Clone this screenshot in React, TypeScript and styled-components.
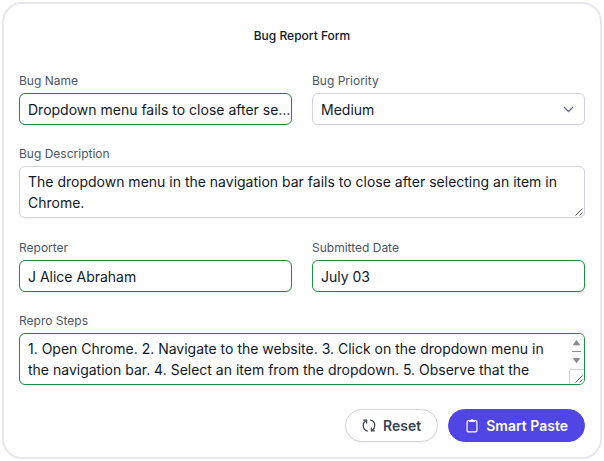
import React from "react";
import styled, { createGlobalStyle, css } from "styled-components";

const GlobalStyle = createGlobalStyle`
  *, *::before, *::after { box-sizing: border-box; }
  body {
    margin: 0;
    padding: 2px;
    background: #fff;
    color: #111827;
    font-family: Inter, "Liberation Sans", sans-serif;
  }
`;

const Card = styled.form`
  display: flex;
  flex-direction: column;
  padding: 24px 15px 15px;
  border: 2px solid #e5e7eb;
  border-radius: 20px;
  background: #fff;
`;

const Title = styled.h1`
  margin: 0 0 28px;
  font-size: 12px;
  line-height: 16px;
  font-weight: 500;
  text-align: center;
`;

const Fields = styled.div`
  display: grid;
  grid-template-columns: 1fr 1fr;
  gap: 20px;
`;

const Field = styled.div<{ $wide?: boolean }>`
  display: flex;
  flex-direction: column;
  gap: 3px;
  min-width: 0;
  ${(p) =>
    p.$wide &&
    css`
      grid-column: 1 / -1;
      padding-bottom: 1px;
    `}
`;

const Label = styled.label`
  font-size: 12px;
  line-height: 18px;
  color: #4b5563;
`;

const control = css<{ $filled?: boolean }>`
  display: block;
  width: 100%;
  margin: 0;
  border: 1px solid ${(p) => (p.$filled ? "#1e8a44" : "#d1d5db")};
  border-radius: 6px;
  background: #fff;
  box-shadow: 0 1px 2px rgba(0, 0, 0, 0.05);
  color: #111827;
  font: 400 14px/21px Inter, "Liberation Sans", sans-serif;
  outline: none;
`;

const TextInput = styled.input<{ $filled?: boolean }>`
  ${control}
  height: 32px;
  padding: 0 0 0 8px;
  text-overflow: ellipsis;
`;

const Select = styled.select<{ $filled?: boolean }>`
  ${control}
  height: 32px;
  padding: 0 32px 0 8px;
  appearance: none;
`;

const TextArea = styled.textarea<{ $filled?: boolean }>`
  ${control}
  height: 52px;
  padding: 4px 23px 4px 8px;
  resize: none;
  overflow: hidden;
`;

const ControlBox = styled.div`
  position: relative;
`;

const Chevron = styled.svg`
  position: absolute;
  right: 11px;
  top: 11px;
  pointer-events: none;
`;

const Grip = styled.svg`
  position: absolute;
  right: 1px;
  bottom: 1px;
  pointer-events: none;
`;

const ScrollBar = styled.svg`
  position: absolute;
  right: 1px;
  top: 1px;
  pointer-events: none;
`;

const Actions = styled.div`
  display: flex;
  justify-content: flex-end;
  gap: 10px;
  margin-top: 23px;
`;

const Button = styled.button<{ $primary?: boolean }>`
  display: flex;
  align-items: center;
  gap: 6px;
  height: 33px;
  padding: 0 16px;
  border: 1px solid ${(p) => (p.$primary ? "#4f46e5" : "#d1d5db")};
  border-radius: 17px;
  background: ${(p) => (p.$primary ? "#4f46e5" : "#fff")};
  box-shadow: ${(p) => (p.$primary ? "none" : "0 1px 2px rgba(0, 0, 0, 0.05)")};
  color: ${(p) => (p.$primary ? "#fff" : "#374151")};
  font: 600 14px/20px Inter, "Liberation Sans", sans-serif;
  cursor: pointer;
`;

const ChevronIcon = () => (
  <Chevron width="11" height="11" viewBox="0 0 11 11" fill="none" aria-hidden="true">
    <path d="M1 3l4.5 4.5L10 3" stroke="#6b7280" strokeWidth="1.3" />
  </Chevron>
);

const GripIcon = () => (
  <Grip width="15" height="15" viewBox="0 0 15 15" fill="none" aria-hidden="true">
    <path d="M6.5 13.5l7-7M10.5 13.5l3-3" stroke="#555" />
  </Grip>
);

const ScrollIcon = () => (
  <ScrollBar width="15" height="50" viewBox="0 0 15 50" fill="none" aria-hidden="true">
    <path d="M0 0h10a5 5 0 0 1 5 5v40a5 5 0 0 1-5 5H0z" fill="#fafafa" />
    <path d="M7.5 6l3.2 4.2c.4.6 0 1-.5 1H4.8c-.5 0-.9-.4-.5-1z" fill="#8b8b8b" />
    <path d="M3 17.5h9" stroke="#8b8b8b" />
    <path d="M7.5 29.2l3.2-4.2c.4-.6 0-1-.5-1H4.8c-.5 0-.9.4-.5 1z" fill="#8b8b8b" />
    <path d="M0 35h15v10a5 5 0 0 1-5 5H0z" fill="#fff" />
    <path d="M.5 50V35.5H15" stroke="#d4d4d4" />
  </ScrollBar>
);

const RepeatIcon = () => (
  <svg width="15" height="15" viewBox="0 0 15 15" fill="none" stroke="currentColor" strokeWidth="1.2" aria-hidden="true">
    <path d="M5.8 13.2C3.2 12.5 1.2 10.300 1.2 7.5c0-2 1-3.700 2.700-4.800" />
    <path d="M1.300 2.200h3.300v3.300" />
    <path d="M8.200 1.800c2.600.7 4.600 2.900 4.600 5.700 0 2-1 3.700-2.700 4.800" />
    <path d="M12.700 12.800H9.400V9.500" />
  </svg>
);

const ClipboardIcon = () => (
  <svg width="15" height="15" viewBox="0 0 15 15" fill="none" aria-hidden="true">
    <rect x="2.1" y="2.6" width="9.8" height="11.3" rx="1.5" stroke="currentColor" strokeWidth="1.2" />
    <path d="M4 2.500h1.300a1.800 1.800 0 0 1 3.400 0H10v1.500H4z" fill="currentColor" />
  </svg>
);

export default function App() {
  return (
    <>
      <GlobalStyle />
      <Card onSubmit={(e: React.FormEvent) => e.preventDefault()}>
        <Title>Bug Report Form</Title>
        <Fields>
          <Field>
            <Label htmlFor="name">Bug Name</Label>
            <TextInput id="name" $filled defaultValue="Dropdown menu fails to close after selection" />
          </Field>
          <Field>
            <Label htmlFor="priority">Bug Priority</Label>
            <ControlBox>
              <Select id="priority" defaultValue="Medium">
                <option>Medium</option>
              </Select>
              <ChevronIcon />
            </ControlBox>
          </Field>
          <Field $wide>
            <Label htmlFor="description">Bug Description</Label>
            <ControlBox>
              <TextArea
                id="description"
                defaultValue="The dropdown menu in the navigation bar fails to close after selecting an item in Chrome."
              />
              <GripIcon />
            </ControlBox>
          </Field>
          <Field>
            <Label htmlFor="reporter">Reporter</Label>
            <TextInput id="reporter" $filled defaultValue="J Alice Abraham" />
          </Field>
          <Field>
            <Label htmlFor="date">Submitted Date</Label>
            <TextInput id="date" $filled defaultValue="July 03" />
          </Field>
          <Field $wide>
            <Label htmlFor="steps">Repro Steps</Label>
            <ControlBox>
              <TextArea
                id="steps"
                $filled
                defaultValue="1. Open Chrome. 2. Navigate to the website. 3. Click on the dropdown menu in the navigation bar. 4. Select an item from the dropdown. 5. Observe that the"
              />
              <ScrollIcon />
              <GripIcon />
            </ControlBox>
          </Field>
        </Fields>
        <Actions>
          <Button type="reset">
            <RepeatIcon />
            Reset
          </Button>
          <Button type="button" $primary>
            <ClipboardIcon />
            Smart Paste
          </Button>
        </Actions>
      </Card>
    </>
  );
}
